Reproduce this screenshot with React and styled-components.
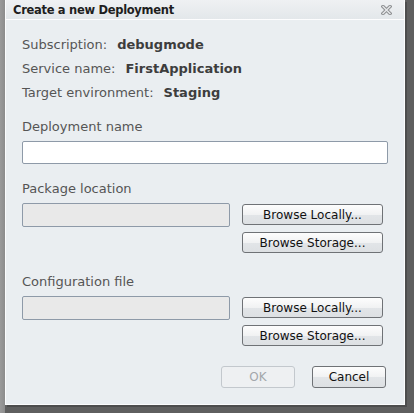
import React from 'react';
import styled, { createGlobalStyle } from 'styled-components';

const Global = createGlobalStyle`
  html, body {
    margin: 0;
    padding: 0;
    background: #6e6e6e;
  }
  body {
    font-family: Tahoma, "DejaVu Sans", Verdana, sans-serif;
  }
`;

const Backdrop = styled.div`
  width: 414px;
  height: 413px;
  background: linear-gradient(to right, #9a9a9a 0, #8c8c8c 5px, #5f5f5f 5px);
  overflow: hidden;
`;

const Dialog = styled.div`
  margin-left: 5px;
  width: 400px;
  height: 405px;
  border: 1px solid #fbfcfd;
  border-top: none;
  background: #eaeef1;
  display: flex;
  flex-direction: column;
  box-sizing: border-box;
  box-shadow: 2px 2px 0 #4d4d4d;
`;

const TitleBar = styled.div`
  height: 19px;
  border-bottom: 1px solid #fdfdfe;
  background: linear-gradient(#eff1f3, #e3e7ea);
  display: flex;
  align-items: center;
  justify-content: space-between;
  padding: 0 12px 0 7px;
`;

const Title = styled.div`
  font-size: 11.5px;
  letter-spacing: -0.3px;
  font-weight: bold;
  color: #1e1e1e;
`;

const Body = styled.div`
  padding: 13px 17px 0 16px;
  display: flex;
  flex-direction: column;
  color: #555;
  font-size: 13px;
`;

const Info = styled.div`
  line-height: 24px;
  display: flex;
  gap: 10px;
`;

const Value = styled.span`
  font-weight: bold;
  color: #3d3d3d;
`;

const Label = styled.div`
  line-height: 16px;
  margin-top: ${({ $top }) => $top}px;
`;

const Input = styled.div`
  box-sizing: border-box;
  margin-top: 6px;
  width: ${({ $w }) => $w}px;
  height: ${({ $h }) => $h}px;
  border: 1px solid #8e9aa8;
  border-radius: 2px;
  background: ${({ $disabled }) => ($disabled ? '#e9e9e9' : '#fff')};
`;

const FileRow = styled.div`
  display: flex;
  gap: 12px;
  align-items: flex-start;
`;

const BrowseCol = styled.div`
  display: flex;
  flex-direction: column;
  gap: 7px;
  margin-top: 7px;
`;

const Button = styled.div`
  box-sizing: border-box;
  width: ${({ $w }) => $w}px;
  height: ${({ $h }) => $h}px;
  border: 1px solid ${({ $disabled }) => ($disabled ? '#c3c8cd' : '#6f7276')};
  border-radius: 3px;
  background: ${({ $disabled }) =>
    $disabled ? '#eef0f2' : 'linear-gradient(#fdfdfd 0%, #f1f2f3 50%, #e2e5e8 51%, #dde0e3 100%)'};
  color: ${({ $disabled }) => ($disabled ? '#a3a7ab' : '#111')};
  font-size: 12px;
  display: flex;
  align-items: center;
  justify-content: center;
`;

const Footer = styled.div`
  display: flex;
  justify-content: flex-end;
  gap: 17px;
  margin-top: 20px;
  padding-right: 1px;
`;

const CloseIcon = () => (
  <svg width="11" height="10" viewBox="0 0 11 10">
    <path d="M2 1.5 L9 8.5 M9 1.5 L2 8.5" stroke="#8d8f91" strokeWidth="3.4" strokeLinecap="square" />
    <path d="M2 1.5 L9 8.5 M9 1.5 L2 8.5" stroke="#e6e8ea" strokeWidth="1.4" strokeLinecap="square" />
  </svg>
);

const FileSection = ({ label, top }) => (
  <>
    <Label $top={top}>{label}</Label>
    <FileRow>
      <Input $w={208} $h={24} $disabled />
      <BrowseCol>
        <Button $w={141} $h={21}>Browse Locally...</Button>
        <Button $w={141} $h={21}>Browse Storage...</Button>
      </BrowseCol>
    </FileRow>
  </>
);

export default function App() {
  return (
    <Backdrop>
      <Global />
      <Dialog>
        <TitleBar>
          <Title>Create a new Deployment</Title>
          <CloseIcon />
        </TitleBar>
        <Body>
          <Info>Subscription: <Value>debugmode</Value></Info>
          <Info>Service name: <Value>FirstApplication</Value></Info>
          <Info>Target environment: <Value>Staging</Value></Info>
          <Label $top={14}>Deployment name</Label>
          <Input $w={366} $h={23} />
          <FileSection label="Package location" top={17} />
          <FileSection label="Configuration file" top={21} />
          <Footer>
            <Button $w={74} $h={22} $disabled>OK</Button>
            <Button $w={74} $h={22}>Cancel</Button>
          </Footer>
        </Body>
      </Dialog>
    </Backdrop>
  );
}
